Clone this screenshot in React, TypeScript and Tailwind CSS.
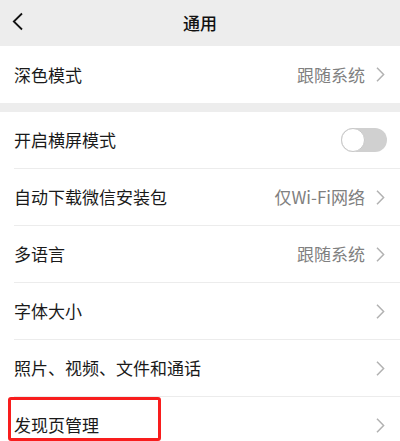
import React from "react";

const font = { fontFamily: '"Noto Sans CJK SC", "Noto Sans", sans-serif' };

function Chevron() {
  return (
    <svg width="9" height="15" viewBox="0 0 9 15" className="shrink-0">
      <polyline points="1,0.8 7.6,7.5 1,14.2" fill="none" stroke="#b2b2b2" strokeWidth="1.5" />
    </svg>
  );
}

function Toggle() {
  return (
    <div className="relative w-[46px] h-[24px] rounded-full bg-[#d0d0d0]">
      <div className="absolute left-0 top-0 w-[24px] h-[24px] rounded-full bg-white border-[1.5px] border-[#c8c8c8]" />
    </div>
  );
}

interface RowProps {
  label: string;
  value?: string;
  toggle?: boolean;
  divider?: boolean;
  highlight?: boolean;
}

function Row({ label, value, toggle, divider, highlight }: RowProps) {
  return (
    <div className="relative bg-white pl-[14px]">
      <div
        className={
          "flex items-center pr-[15px] " +
          (divider ? "border-t border-[#ececec] h-[57px]" : "h-[56px]")
        }
      >
        <span className="flex-1 text-[17px] text-[#1a1a1a]">{label}</span>
        {toggle ? (
          <div className="mr-[-2px]">
            <Toggle />
          </div>
        ) : (
          <div className="flex items-center gap-[11px]">
            {value && <span className="text-[17px] text-[#808080]">{value}</span>}
            <Chevron />
          </div>
        )}
      </div>
      {highlight && (
        <div className="absolute left-[8px] top-[1px] w-[153px] h-[44px] border-[3px] border-[#f81d1d] rounded-[3px]" />
      )}
    </div>
  );
}

export default function App() {
  return (
    <div className="w-[400px] h-[441px] overflow-hidden bg-[#ededed]" style={font}>
      <header className="relative h-[46px] flex items-center justify-center">
        <svg width="12" height="20" viewBox="0 0 12 20" className="absolute left-[12px] top-[12px]">
          <polyline points="10,1.5 1.8,9.5 10,17.5" fill="none" stroke="#111" strokeWidth="1.8" />
        </svg>
        <h1 className="text-[17px] font-medium text-[#111]">通用</h1>
      </header>

      <div className="bg-white pl-[14px]">
        <div className="flex items-center h-[57px] pr-[15px]">
          <span className="flex-1 text-[17px] text-[#1a1a1a]">深色模式</span>
          <div className="flex items-center gap-[11px]">
            <span className="text-[17px] text-[#808080]">跟随系统</span>
            <Chevron />
          </div>
        </div>
      </div>

      <div className="h-[9px]" />

      <Row label="开启横屏模式" toggle />
      <Row label="自动下载微信安装包" value="仅Wi-Fi网络" divider />
      <Row label="多语言" value="跟随系统" divider />
      <Row label="字体大小" divider />
      <Row label="照片、视频、文件和通话" divider />
      <Row label="发现页管理" divider highlight />
    </div>
  );
}
